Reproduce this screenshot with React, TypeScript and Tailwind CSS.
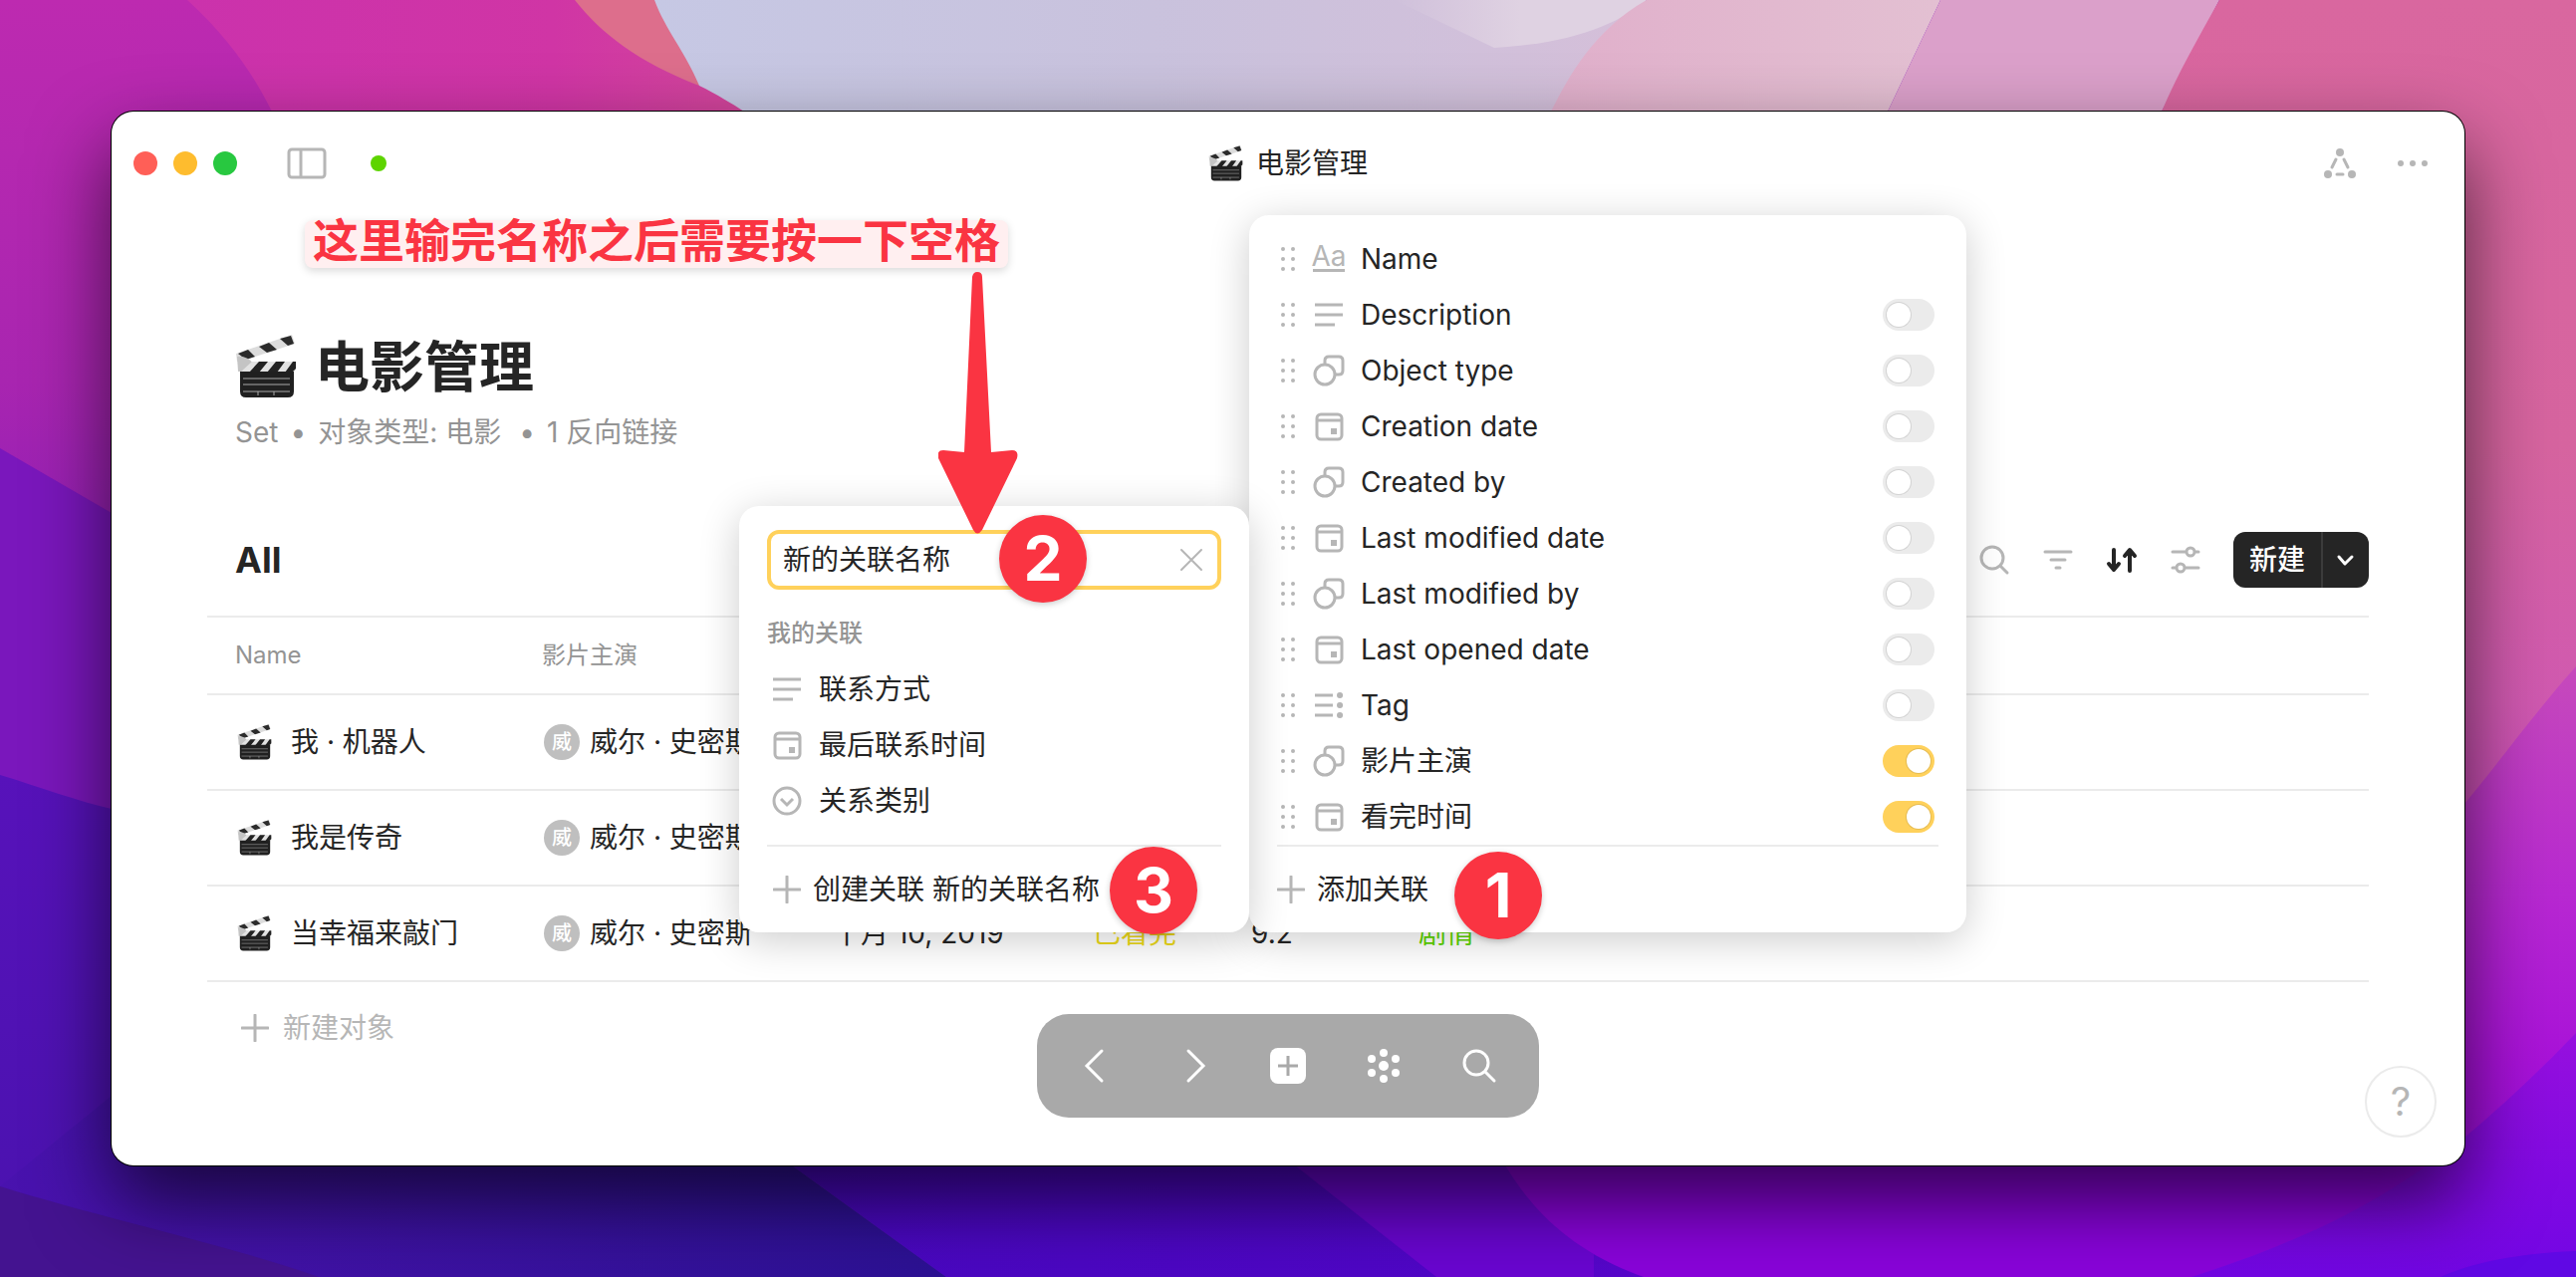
import { useState } from 'react';
import type { ReactNode } from 'react';

type IconName = 'title' | 'text' | 'object' | 'date' | 'tag' | 'select';

interface Relation {
  id: string;
  name: string;
  icon: IconName;
  fixed?: boolean;
}

const relations: Relation[] = [
  { id: 'name', name: 'Name', icon: 'title', fixed: true },
  { id: 'description', name: 'Description', icon: 'text' },
  { id: 'type', name: 'Object type', icon: 'object' },
  { id: 'createdDate', name: 'Creation date', icon: 'date' },
  { id: 'creator', name: 'Created by', icon: 'object' },
  { id: 'modifiedDate', name: 'Last modified date', icon: 'date' },
  { id: 'modifiedBy', name: 'Last modified by', icon: 'object' },
  { id: 'openedDate', name: 'Last opened date', icon: 'date' },
  { id: 'tag', name: 'Tag', icon: 'tag' },
  { id: 'actor', name: '影片主演', icon: 'object' },
  { id: 'watched', name: '看完时间', icon: 'date' },
];

const myRelations: Relation[] = [
  { id: 'contact', name: '联系方式', icon: 'text' },
  { id: 'lastContact', name: '最后联系时间', icon: 'date' },
  { id: 'kind', name: '关系类别', icon: 'select' },
];

const movies = [
  { name: '我 · 机器人', actor: '威尔 · 史密斯' },
  { name: '我是传奇', actor: '威尔 · 史密斯' },
  { name: '当幸福来敲门', actor: '威尔 · 史密斯', date: '十月 10, 2019', status: '已看完', score: '9.2', genre: '剧情' },
];

function Wallpaper() {
  return (
    <svg className="absolute inset-0 h-full w-full" viewBox="0 0 2586 1282" preserveAspectRatio="none" aria-hidden="true">
      <defs>
        <linearGradient id="left" x1="0" y1="0" x2="0" y2="1">
          <stop offset="0" stopColor="#bd2ab0" />
          <stop offset="0.3" stopColor="#a825b0" />
          <stop offset="0.6" stopColor="#7a18bd" />
          <stop offset="1" stopColor="#4a12a8" />
        </linearGradient>
        <linearGradient id="magenta" x1="0" y1="0" x2="1" y2="0">
          <stop offset="0" stopColor="#cb32ac" />
          <stop offset="0.6" stopColor="#d035a5" />
          <stop offset="1" stopColor="#d34b98" />
        </linearGradient>
        <linearGradient id="lavender" x1="0" y1="0" x2="1" y2="0">
          <stop offset="0" stopColor="#c6c8e4" />
          <stop offset="0.5" stopColor="#c9c2dd" />
          <stop offset="1" stopColor="#d5bfd9" />
        </linearGradient>
        <linearGradient id="mist" x1="0" y1="0" x2="1" y2="0">
          <stop offset="0" stopColor="#dfd2e2" stopOpacity="0" />
          <stop offset="0.5" stopColor="#dfd2e2" />
        </linearGradient>
        <linearGradient id="rose" x1="0" y1="0" x2="1" y2="0">
          <stop offset="0" stopColor="#e0adca" />
          <stop offset="1" stopColor="#e3c0d2" />
        </linearGradient>
        <linearGradient id="right" x1="0" y1="0" x2="0" y2="1">
          <stop offset="0" stopColor="#d9679f" />
          <stop offset="0.35" stopColor="#d6649f" />
          <stop offset="0.55" stopColor="#d059b0" />
          <stop offset="1" stopColor="#b018d0" />
        </linearGradient>
        <linearGradient id="orchid" x1="0" y1="0" x2="0" y2="1">
          <stop offset="0" stopColor="#c64abb" />
          <stop offset="0.4" stopColor="#b626d2" />
          <stop offset="0.65" stopColor="#a812d8" />
          <stop offset="1" stopColor="#8a08dc" />
        </linearGradient>
        <linearGradient id="violet" x1="0" y1="0" x2="0" y2="1">
          <stop offset="0" stopColor="#9610de" />
          <stop offset="0.6" stopColor="#8009e2" />
          <stop offset="1" stopColor="#7206e4" />
        </linearGradient>
        <linearGradient id="indigo" x1="0" y1="0" x2="1" y2="0">
          <stop offset="0" stopColor="#4912ae" />
          <stop offset="1" stopColor="#2c1194" />
        </linearGradient>
        <linearGradient id="blue" x1="0" y1="0" x2="0" y2="1">
          <stop offset="0" stopColor="#5712ba" />
          <stop offset="1" stopColor="#4912ae" />
        </linearGradient>
        <linearGradient id="floor" x1="0" y1="0" x2="1" y2="0">
          <stop offset="0" stopColor="#4808c0" />
          <stop offset="0.45" stopColor="#5006c8" />
          <stop offset="1" stopColor="#7a08e0" />
        </linearGradient>
      </defs>
      <rect width="1293" height="1282" fill="url(#left)" />
      <path d="M655 0H1653L1557 112L1500 220H700Z" fill="url(#lavender)" />
      <path d="M570 0H657C668 30 688 52 702 86L690 100H600Z" fill="#dd6e8c" />
      <path d="M188 0C232 40 256 78 273 112L300 200H800L747 112C735 104 720 95 702 86C640 62 604 34 577 0Z" fill="url(#magenta)" />
      <path d="M1400 0H1653C1620 28 1570 44 1500 48Z" fill="url(#mist)" />
      <path d="M1653 0H1948L1895 112L1860 220H1500L1557 112C1574 78 1600 30 1653 0Z" fill="url(#rose)" />
      <path d="M1948 0H2228L2170 112L2140 220H1860L1895 112Z" fill="#dba0ca" />
      <path d="M2228 0H2586V1282H2100V220L2170 112C2186 74 2208 36 2228 0Z" fill="url(#right)" />
      <path d="M2586 669C2545 715 2505 770 2474 807L2300 1282H2586Z" fill="url(#orchid)" />
      <path d="M0 450L112 515L400 700V1282H0Z" fill="#7a17bc" />
      <path d="M0 778C40 790 80 805 112 812L400 900V1282H0Z" fill="url(#blue)" />
      <path d="M112 1100H700L795 1170L950 1282H0V1191Z" fill="url(#indigo)" />
      <path d="M0 1191C110 1225 230 1250 320 1282H0Z" fill="#441390" />
      <path d="M700 1100H2400V1282H950L795 1170Z" fill="url(#floor)" />
      <path d="M1230 1100H1600V1282H1442L1300 1170Z" fill="#6a06d2" />
      <path d="M1480 1100H2474V1282H1650C1560 1250 1510 1190 1480 1100Z" fill="#8a04dc" />
      <path d="M2586 1037C2540 1085 2500 1120 2474 1142C2400 1200 2330 1240 2200 1282H2586Z" fill="url(#violet)" />
      <path d="M2450 1282C2490 1264 2540 1258 2586 1256V1282Z" fill="#6008e4" />
    </svg>
  );
}

function Clapper({ className }: { className: string }) {
  return (
    <svg className={className} viewBox="0 0 64 64" aria-hidden="true">
      <path d="M1 19L57 0L60 9L8 26L2 27Z" fill="#dcdcdc" />
      <path d="M3 19L13 15L20 22L11 25ZM24 12L34 8L42 15L32 18ZM45 4L56 1L59 9L53 11Z" fill="#2b2b2b" />
      <path d="M2 22C8 21 15 24 18 29L15 37H3Z" fill="#c4c4c4" />
      <path d="M17 27H59Q62 28 61 35L59 38H5Z" fill="#e2e2e2" />
      <path d="M24 27H33L24 38H14ZM41 27H50L42 38H32ZM58 27H61V34L57 38H50Z" fill="#222" />
      <path d="M5 37H59V57Q59 63 53 63H11Q5 63 5 57Z" fill="#202020" />
      <path d="M8 44H55M8 50H55M8 57H55M23 57V61M39 57V61" stroke="#a8a8a8" strokeWidth="1" fill="none" />
    </svg>
  );
}

function RelationIcon({ name }: { name: IconName }) {
  if (name === 'title') {
    return (
      <span className="flex h-[26px] w-8 shrink-0 items-start justify-center border-b-3 border-[#b6b6b6] text-[28px] leading-5 text-[#b6b6b6]">
        Aa
      </span>
    );
  }
  return (
    <svg className="h-8 w-8 shrink-0" viewBox="0 0 32 32" fill="none" stroke="#b6b6b6" strokeWidth="3" aria-hidden="true">
      {name === 'text' && <path d="M2 6H30M2 16H30M2 26H22" />}
      {name === 'object' && (
        <>
          <path d="M12 10V6Q12 2 16 2H26Q30 2 30 6V16Q30 20 26 20H23" />
          <circle cx="12" cy="20" r="10" />
        </>
      )}
      {name === 'date' && (
        <>
          <rect x="4" y="4" width="25" height="25" rx="4" />
          <path d="M4 10H29" />
          <path d="M18 18H24V24H18Z" fill="#b6b6b6" stroke="none" />
        </>
      )}
      {name === 'tag' && (
        <>
          <path d="M2 6H20M2 16H20M2 26H20" />
          <path d="M27 6H27.1M27 16H27.1M27 26H27.1" strokeWidth="6" strokeLinecap="round" />
        </>
      )}
      {name === 'select' && (
        <>
          <circle cx="16" cy="16" r="13" />
          <path d="M10 14L16 20L22 14" />
        </>
      )}
    </svg>
  );
}

function Grip() {
  return (
    <svg className="h-6 w-4 shrink-0" viewBox="0 0 16 24" fill="#b6b6b6" aria-hidden="true">
      <circle cx="3" cy="2" r="2" />
      <circle cx="13" cy="2" r="2" />
      <circle cx="3" cy="12" r="2" />
      <circle cx="13" cy="12" r="2" />
      <circle cx="3" cy="22" r="2" />
      <circle cx="13" cy="22" r="2" />
    </svg>
  );
}

function Plus() {
  return (
    <svg className="h-7 w-7 shrink-0" viewBox="0 0 28 28" stroke="#b6b6b6" strokeWidth="3" strokeLinecap="round" aria-hidden="true">
      <path d="M14 1V27M1 14H27" />
    </svg>
  );
}

function IconButton({ label, className = '', children }: { label: string; className?: string; children: ReactNode }) {
  return (
    <button type="button" aria-label={label} className={`flex items-center justify-center ${className}`}>
      {children}
    </button>
  );
}

function Badge({ value, className }: { value: number; className: string }) {
  return (
    <div className={`absolute flex h-[88px] w-[88px] items-center justify-center rounded-full bg-[#fa3442] text-[62px] leading-none font-bold text-white shadow-[0_2px_6px_rgba(0,0,0,0.2)] ${className}`}>
      {value}
    </div>
  );
}

function TitleBar() {
  return (
    <header className="grid h-[104px] grid-cols-[1fr_auto_1fr] items-center">
      <div className="flex items-center pl-[22px]">
        <div className="flex gap-4">
          <button type="button" aria-label="关闭" className="h-6 w-6 rounded-full bg-[#ff5f57]" />
          <button type="button" aria-label="最小化" className="h-6 w-6 rounded-full bg-[#febc2e]" />
          <button type="button" aria-label="缩放" className="h-6 w-6 rounded-full bg-[#28c840]" />
        </div>
        <IconButton label="侧边栏" className="ml-[50px]">
          <svg className="h-8 w-10" viewBox="0 0 40 32" fill="none" stroke="#b6b6b6" strokeWidth="3">
            <rect x="2" y="2" width="36" height="28" rx="3" />
            <path d="M14 2V30" />
          </svg>
        </IconButton>
        <span className="ml-11 h-4 w-4 rounded-full bg-[#5dd400]" />
      </div>
      <div className="flex items-center gap-3">
        <Clapper className="h-9 w-9" />
        <span className="text-[28px] leading-10">电影管理</span>
      </div>
      <div className="flex items-center justify-end gap-10 pr-9">
        <IconButton label="关系图">
          <svg className="h-8 w-9" viewBox="0 0 36 32" fill="#b6b6b6" stroke="#b6b6b6" strokeWidth="3" strokeLinecap="round">
            <path d="M15 12L11 20M23 12L27 20M16 27H22" />
            <circle cx="19" cy="5" r="4" stroke="none" />
            <circle cx="7" cy="27" r="4" stroke="none" />
            <circle cx="31" cy="27" r="4" stroke="none" />
          </svg>
        </IconButton>
        <IconButton label="更多">
          <svg className="h-8 w-8" viewBox="0 0 32 32" fill="#b6b6b6">
            <circle cx="4" cy="16" r="3" />
            <circle cx="16" cy="16" r="3" />
            <circle cx="28" cy="16" r="3" />
          </svg>
        </IconButton>
      </div>
    </header>
  );
}

function ViewControls() {
  return (
    <div className="mt-20 flex h-14 items-center justify-between pl-7">
      <h2 className="text-[36px] leading-14 font-bold">All</h2>
      <div className="flex items-center gap-8">
        <IconButton label="搜索">
          <svg className="h-8 w-8" viewBox="0 0 32 32" fill="none" stroke="#b6b6b6" strokeWidth="3" strokeLinecap="round">
            <circle cx="14" cy="14" r="11" />
            <path d="M22 22L29 29" />
          </svg>
        </IconButton>
        <IconButton label="筛选">
          <svg className="h-8 w-8" viewBox="0 0 32 32" fill="none" stroke="#b6b6b6" strokeWidth="3" strokeLinecap="round">
            <path d="M3 8H29M9 16H23M14 24H18" />
          </svg>
        </IconButton>
        <IconButton label="排序">
          <svg className="h-8 w-8" viewBox="0 0 32 32" fill="none" stroke="#252525" strokeWidth="4" strokeLinecap="round" strokeLinejoin="round">
            <path d="M8 6V26M3 20L8 26L13 20M24 27V7M19 12L24 6L29 12" />
          </svg>
        </IconButton>
        <IconButton label="关联设置">
          <svg className="h-8 w-8" viewBox="0 0 32 32" fill="none" stroke="#b6b6b6" strokeWidth="3" strokeLinecap="round">
            <path d="M3 8H16M26 8H29M3 24H6M16 24H29" />
            <circle cx="21" cy="8" r="4" />
            <circle cx="11" cy="24" r="4" />
          </svg>
        </IconButton>
        <div className="flex h-14 overflow-hidden rounded-xl bg-[#252525] text-white">
          <button type="button" className="w-[88px] text-[28px] leading-14 font-medium">
            新建
          </button>
          <IconButton label="更多新建选项" className="w-12 border-l-2 border-[#3b3b3b]">
            <svg className="h-4 w-5" viewBox="0 0 20 16" fill="none" stroke="currentColor" strokeWidth="3" strokeLinecap="round" strokeLinejoin="round">
              <path d="M3 5L9 12L16 5" />
            </svg>
          </IconButton>
        </div>
      </div>
    </div>
  );
}

function MovieTable() {
  return (
    <table className="mt-7 w-full table-fixed border-separate border-spacing-0 border-t-2 border-[#ebebeb] text-left text-[28px] leading-10">
      <thead>
        <tr className="h-[78px] text-[24px] text-[#949494]">
          <th className="w-[308px] border-b-2 border-[#ebebeb] pl-7 font-normal">Name</th>
          <th className="w-[292px] border-b-2 border-[#ebebeb] pl-7 font-normal">影片主演</th>
          <th className="w-[261px] border-b-2 border-[#ebebeb]" />
          <th className="w-[159px] border-b-2 border-[#ebebeb]" />
          <th className="w-[168px] border-b-2 border-[#ebebeb]" />
          <th className="border-b-2 border-[#ebebeb]" />
        </tr>
      </thead>
      <tbody>
        {movies.map((movie) => (
          <tr key={movie.name} className="h-24 whitespace-nowrap">
            <td className="border-b-2 border-[#ebebeb] pl-7">
              <div className="flex items-center gap-4">
                <Clapper className="mx-0.5 h-9 w-9" />
                <span>{movie.name}</span>
              </div>
            </td>
            <td className="border-b-2 border-[#ebebeb] pl-7">
              <div className="flex items-center gap-2.5">
                <span className="ml-0.5 flex h-9 w-9 items-center justify-center rounded-full bg-[#bfbfbf] text-[20px] leading-9 font-medium text-white">
                  威
                </span>
                <span>{movie.actor}</span>
              </div>
            </td>
            <td className="border-b-2 border-[#ebebeb] pl-7">{movie.date}</td>
            <td className="border-b-2 border-[#ebebeb] pl-7 text-[#ecd91b]">{movie.status}</td>
            <td className="border-b-2 border-[#ebebeb] pl-7">{movie.score}</td>
            <td className="border-b-2 border-[#ebebeb] pl-7 text-[#5dd400]">{movie.genre}</td>
          </tr>
        ))}
      </tbody>
    </table>
  );
}

function RelationMenu() {
  const [visible, setVisible] = useState<string[]>(['actor', 'watched']);

  const toggle = (id: string) => {
    setVisible(visible.includes(id) ? visible.filter((item) => item !== id) : [...visible, id]);
  };

  return (
    <div className="absolute top-[104px] right-[500px] w-[720px] rounded-[20px] bg-white px-7 pt-4 text-[28px] leading-10 shadow-[0_8px_40px_rgba(0,0,0,0.2)]">
      <ul>
        {relations.map((relation) => (
          <li key={relation.id} className="flex h-14 items-center pr-1 pl-[3px]">
            <Grip />
            <label htmlFor={relation.fixed ? undefined : relation.id} className="ml-[17px] flex flex-1 items-center gap-4">
              <RelationIcon name={relation.icon} />
              {relation.name}
            </label>
            {!relation.fixed && (
              <input
                id={relation.id}
                type="checkbox"
                role="switch"
                checked={visible.includes(relation.id)}
                onChange={() => toggle(relation.id)}
                className="flex h-8 w-[52px] appearance-none items-center rounded-full bg-[#ebebeb] pl-1 before:h-6 before:w-6 before:rounded-full before:bg-white before:shadow-[0_0_0_1px_rgba(0,0,0,0.1)] checked:bg-[#ffd15b] checked:before:translate-x-5"
              />
            )}
          </li>
        ))}
      </ul>
      <button type="button" className="flex h-[88px] w-full items-center gap-3 border-t-2 border-[#ebebeb]">
        <Plus />
        添加关联
      </button>
      <Badge value={1} className="top-[639px] left-[206px]" />
    </div>
  );
}

function RelationSearch() {
  const [name, setName] = useState('新的关联名称');

  return (
    <div className="absolute top-[396px] right-[1220px] w-[512px] rounded-[20px] bg-white px-7 pt-6 text-[28px] leading-10 shadow-[0_8px_40px_rgba(0,0,0,0.2)]">
      <div className="flex h-[60px] items-center rounded-xl border-4 border-[#ffd15b] pr-3 pl-3">
        <input
          aria-label="关联名称"
          value={name}
          onChange={(e) => setName(e.target.value)}
          className="min-w-0 flex-1 bg-transparent outline-none"
        />
        <IconButton label="清除">
          <svg className="h-7 w-7" viewBox="0 0 28 28" stroke="#b6b6b6" strokeWidth="2" strokeLinecap="round">
            <path d="M4 4L24 24M24 4L4 24" />
          </svg>
        </IconButton>
      </div>
      <h3 className="mt-6 text-[24px] leading-10 font-medium text-[#949494]">我的关联</h3>
      <ul className="mt-2 pb-4">
        {myRelations.map((relation) => (
          <li key={relation.id}>
            <button type="button" className="flex h-14 w-full items-center gap-4 pl-1">
              <RelationIcon name={relation.icon} />
              {relation.name}
            </button>
          </li>
        ))}
      </ul>
      <button type="button" className="flex h-[88px] w-full items-center gap-3 border-t-2 border-[#ebebeb] pl-1.5">
        <Plus />
        创建关联 {name}
      </button>

      <div className="absolute top-[-287px] left-[-436px] flex h-12 items-start rounded-lg bg-[#ffeff0] px-2 text-[46px] leading-10 font-bold whitespace-nowrap text-[#fa3442] shadow-[0_3px_8px_rgba(0,0,0,0.15)]">
        这里输完名称之后需要按一下空格
      </div>
      <svg className="absolute top-[-235px] left-[200px] h-[263px] w-20" viewBox="0 0 80 263" fill="#fa3442" aria-hidden="true">
        <path d="M34 5Q35 0 39 0Q44 0 44 5L53 181L74 179Q81 179 79 187L44 259Q39 266 35 259L0 187Q-2 179 5 179L26 181Z" />
      </svg>
      <Badge value={2} className="top-[9px] left-[261px]" />
      <Badge value={3} className="top-[342px] left-[372px]" />
    </div>
  );
}

function BottomNav() {
  return (
    <nav className="absolute bottom-12 left-1/2 flex h-[104px] -translate-x-1/2 items-center rounded-[32px] bg-[#a9a9a9] px-3">
      <IconButton label="后退" className="h-24 w-24">
        <svg className="h-10 w-10" viewBox="0 0 40 40" fill="none" stroke="#fff" strokeWidth="3" strokeLinecap="round">
          <path d="M25 5L10 20L25 35" />
        </svg>
      </IconButton>
      <IconButton label="前进" className="h-24 w-24">
        <svg className="h-10 w-10" viewBox="0 0 40 40" fill="none" stroke="#fff" strokeWidth="3" strokeLinecap="round">
          <path d="M16 5L31 20L16 35" />
        </svg>
      </IconButton>
      <IconButton label="新建" className="h-24 w-24">
        <svg className="h-10 w-10" viewBox="0 0 40 40">
          <rect x="2" y="2" width="36" height="36" rx="8" fill="#fff" />
          <path d="M20 10V30M10 20H30" stroke="#a9a9a9" strokeWidth="3" />
        </svg>
      </IconButton>
      <IconButton label="关系图" className="h-24 w-24">
        <svg className="h-10 w-10" viewBox="0 0 40 40" fill="#fff">
          <circle cx="20" cy="20" r="5" />
          <circle cx="20" cy="7" r="4" />
          <circle cx="20" cy="33" r="4" />
          <circle cx="8" cy="13" r="4" />
          <circle cx="32" cy="13" r="4" />
          <circle cx="8" cy="27" r="4" />
          <circle cx="32" cy="27" r="4" />
        </svg>
      </IconButton>
      <IconButton label="搜索" className="h-24 w-24">
        <svg className="h-10 w-10" viewBox="0 0 40 40" fill="none" stroke="#fff" strokeWidth="3" strokeLinecap="round">
          <circle cx="17" cy="17" r="12" />
          <path d="M26 26L35 35" />
        </svg>
      </IconButton>
    </nav>
  );
}

export default function App() {
  return (
    <div className="relative flex min-h-screen overflow-hidden bg-[#7a17bc] p-28 font-['Inter','Noto_Sans_CJK_SC',sans-serif] text-[#252525]">
      <Wallpaper />
      <main className="relative flex-1 rounded-[22px] bg-white shadow-[0_0_0_1px_#000,0_36px_80px_rgba(0,0,0,0.65)]">
        <TitleBar />
        <section className="px-24 pt-[116px]">
          <div className="pl-7">
            <h1 className="flex items-center gap-4 text-[55px] leading-[72px] font-bold">
              <Clapper className="h-16 w-16" />
              电影管理
            </h1>
            <div className="mt-2.5 flex gap-3 text-[28px] leading-10 text-[#949494]">
              <span>Set</span>
              <span>•</span>
              <span>对象类型: 电影</span>
              <span className="ml-1.5">•</span>
              <span>1 反向链接</span>
            </div>
          </div>
          <ViewControls />
          <MovieTable />
          <button type="button" className="flex h-[92px] items-center gap-3.5 pl-[34px] text-[28px] leading-10 text-[#b6b6b6]">
            <Plus />
            新建对象
          </button>
        </section>
        <BottomNav />
        <IconButton
          label="帮助"
          className="absolute right-7 bottom-7 h-[72px] w-[72px] rounded-full border-2 border-[#ebebeb] text-[40px] leading-none text-[#b6b6b6]"
        >
          ?
        </IconButton>
        <RelationMenu />
        <RelationSearch />
      </main>
    </div>
  );
}
